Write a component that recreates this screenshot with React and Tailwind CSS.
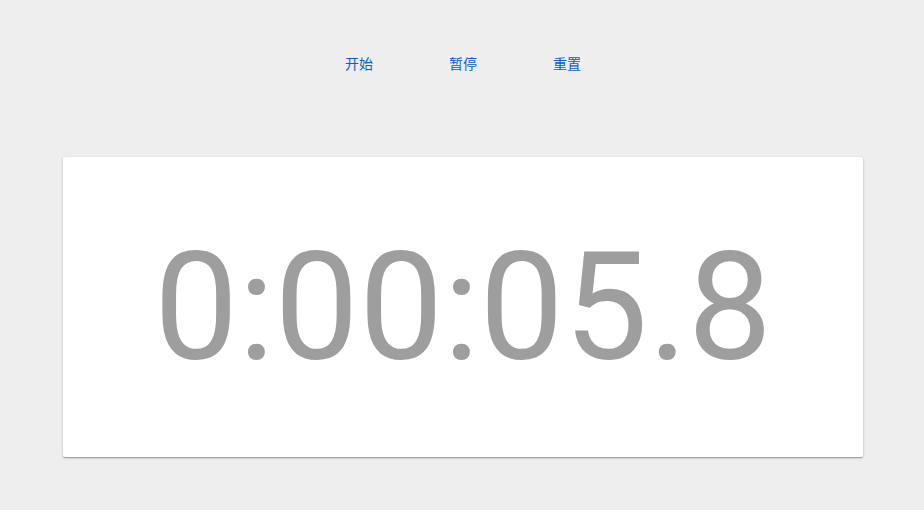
export default function App() {
  return (
    <div className="min-h-[510px] w-full bg-[#eeeeee] flex flex-col items-center pl-[2px]">
      <div className="flex justify-center pt-[45px]">
        {["开始", "暂停", "重置"].map((t) => (
          <button
            key={t}
            className="mx-2 min-w-[88px] h-9 px-2 text-[14px] text-[#0a5bcc] bg-transparent flex items-center justify-center font-['Noto_Sans_CJK_SC',sans-serif] leading-none"
          >
            {t}
          </button>
        ))}
      </div>
      <div className="mt-[76px] w-[800px] h-[300px] bg-white rounded-[2px] shadow-[0_1px_3px_rgba(0,0,0,0.2),0_1px_1px_rgba(0,0,0,0.14),0_2px_1px_-1px_rgba(0,0,0,0.12)] flex items-center justify-center">
        <div className="font-['Roboto',sans-serif] text-[150px] leading-none text-[#9e9e9e] font-normal pt-[2px]">
          0:00:05.8
        </div>
      </div>
    </div>
  );
}
